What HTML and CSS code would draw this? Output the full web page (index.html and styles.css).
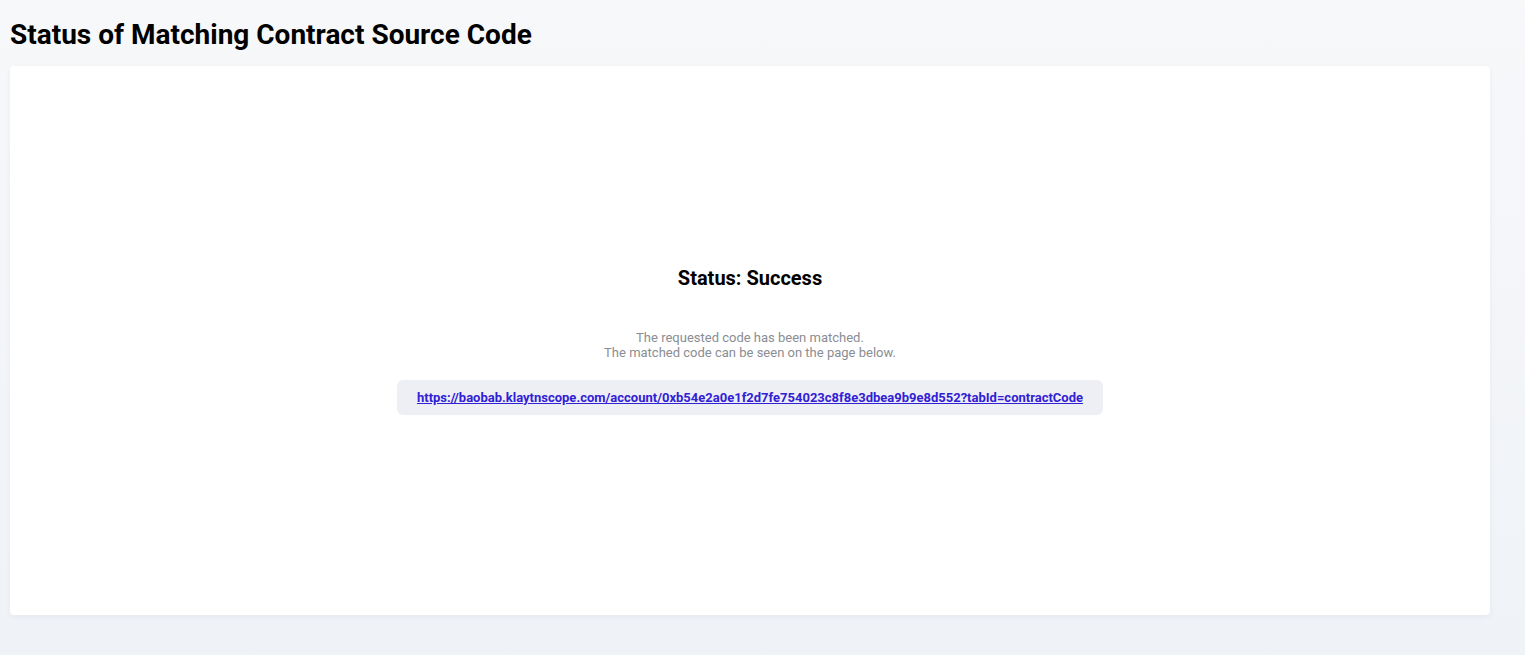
FILE: index.html
```html
<!DOCTYPE html>
<html lang="en">
<head>
<meta charset="utf-8">
<title>Status of Matching Contract Source Code</title>
<link rel="stylesheet" href="styles.css">
</head>
<body>
<div class="page">
  <h1 class="page-title">Status of Matching Contract Source Code</h1>
  <section class="card">
    <div class="result">
      <h2 class="result-title">Status: Success</h2>
      <p class="result-desc">The requested code has been matched.<br>The matched code can be seen on the page below.</p>
      <div class="link-box">
        <a class="result-link" href="#">https://baobab.klaytnscope.com/account/0xb54e2a0e1f2d7fe754023c8f8e3dbea9b9e8d552?tabId=contractCode</a>
      </div>
    </div>
  </section>
</div>
</body>
</html>
```

FILE: styles.css
```css
html, body {
  margin: 0;
  padding: 0;
}
body {
  font-family: Roboto, "Liberation Sans", Arial, sans-serif;
  background: linear-gradient(to bottom, #f7f8fa 0%, #eff2f7 100%);
  min-height: 655px;
  color: #000;
}
.page {
  padding: 18px 35px 40px 10px;
}
.page-title {
  margin: 0;
  font-size: 28px;
  font-weight: 700;
  line-height: 34px;
  height: 34px;
  color: #000;
}
.card {
  margin-top: 14px;
  height: 549px;
  box-sizing: border-box;
  padding-bottom: 1px;
  background: #fff;
  border-radius: 4px;
  box-shadow: 0 2px 6px rgba(40, 50, 80, 0.05);
  display: flex;
  align-items: center;
  justify-content: center;
}
.result {
  display: flex;
  flex-direction: column;
  align-items: center;
}
.result-title {
  margin: 0;
  font-size: 20px;
  font-weight: 700;
  line-height: 24px;
}
.result-desc {
  margin: 40px 0 0;
  font-size: 13px;
  line-height: 15px;
  color: #8a8d93;
  text-align: center;
}
.link-box {
  margin-top: 20px;
  background: #eeeff5;
  border-radius: 6px;
  padding: 0 20px;
  height: 35px;
  display: flex;
  align-items: center;
}
.result-link {
  font-size: 13px;
  font-weight: 700;
  color: #3220d6;
  text-decoration: underline;
}
```
